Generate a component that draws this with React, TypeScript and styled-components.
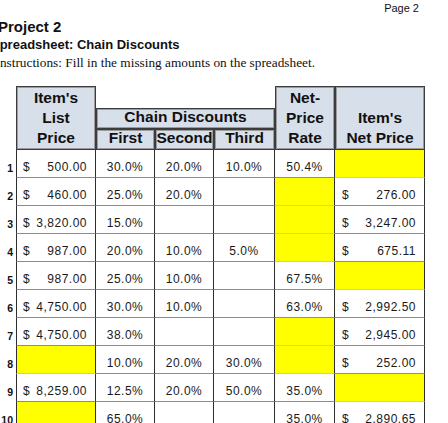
import React from "react";
import styled, { createGlobalStyle, css } from "styled-components";

const GlobalStyle = createGlobalStyle`
  html, body { margin: 0; padding: 0; background: #ffffff; }
  body { font-family: "Liberation Sans", Arial, sans-serif; color: #111; overflow: hidden; }
`;

const COLS = "16px 80px 59px 59px 61px 60px 90px";

const Page = styled.div`
  width: 448px;
  height: 423px;
  overflow: hidden;
`;

const PageNum = styled.div`
  font-size: 11px;
  line-height: 14px;
  padding-top: 1px;
  padding-right: 29px;
  text-align: right;
  color: #111;
`;

const Title = styled.h1`
  margin: 3px 0 0 -2px;
  font-size: 15px;
  line-height: 18px;
  font-weight: bold;
`;

const Subtitle = styled.h2`
  margin: 0 0 0 -9px;
  font-size: 13px;
  line-height: 18px;
  font-weight: bold;
`;

const Instructions = styled.p`
  margin: 0 0 0 -4.5px;
  font-family: "Liberation Serif", "Times New Roman", serif;
  font-size: 13.3px;
  line-height: 17px;
`;

const HeaderGrid = styled.div`
  display: grid;
  grid-template-columns: ${COLS};
  grid-template-rows: 22px 21px 21px;
  margin-top: 15px;
`;

const HeaderCell = styled.div<{ $col: string; $row: string }>`
  grid-column: ${(p) => p.$col};
  grid-row: ${(p) => p.$row};
  box-sizing: border-box;
  background: #d7dfea;
  border: 1px solid #3c3c3c;
  box-shadow: inset 0 0 0 1px #9c9c9c;
  display: flex;
  flex-direction: column;
  justify-content: flex-end;
  align-items: center;
  padding-bottom: 1px;
  font-weight: bold;
  font-size: 15.5px;
  line-height: 20px;
  color: #111;
  text-align: center;
  white-space: nowrap;
  overflow: hidden;
`;

const BodyGrid = styled.div`
  display: grid;
  grid-template-columns: ${COLS};
  grid-auto-rows: 28px;
`;

const RowNum = styled.div`
  display: flex;
  align-items: flex-end;
  justify-content: flex-end;
  padding: 0 3px 4px 0;
  font-size: 10.5px;
  line-height: 12px;
  font-weight: bold;
  color: #111;
`;

const Cell = styled.div<{ $yellow?: boolean; $first?: boolean; $money?: boolean; $lpad?: number }>`
  box-sizing: border-box;
  border-right: 1px solid #2e2e2e;
  border-bottom: 1px solid #8c8c8c;
  ${(p) => p.$first && css`border-left: 1px solid #2e2e2e;`}
  background: ${(p) => (p.$yellow ? "#ffff00" : "#ffffff")};
  ${(p) => p.$yellow && css`border-bottom-color: #d4d46a;`}
  display: flex;
  align-items: flex-end;
  justify-content: ${(p) => (p.$money ? "space-between" : "center")};
  padding: 0 ${(p) => (p.$money ? 8 : 0)}px 3px ${(p) => (p.$money ? p.$lpad ?? 6 : 0)}px;
  font-size: 12px;
  line-height: 14px;
  letter-spacing: 0.5px;
  color: #1a1a1a;
`;

type Row = {
  list: string | null;
  first: string;
  second: string;
  third: string;
  rate: string | null;
  net: string | null;
};

const rows: Row[] = [
  { list: "500.00", first: "30.0%", second: "20.0%", third: "10.0%", rate: "50.4%", net: null },
  { list: "460.00", first: "25.0%", second: "20.0%", third: "", rate: null, net: "276.00" },
  { list: "3,820.00", first: "15.0%", second: "", third: "", rate: null, net: "3,247.00" },
  { list: "987.00", first: "20.0%", second: "10.0%", third: "5.0%", rate: null, net: "675.11" },
  { list: "987.00", first: "25.0%", second: "10.0%", third: "", rate: "67.5%", net: null },
  { list: "4,750.00", first: "30.0%", second: "10.0%", third: "", rate: "63.0%", net: "2,992.50" },
  { list: "4,750.00", first: "38.0%", second: "", third: "", rate: null, net: "2,945.00" },
  { list: null, first: "10.0%", second: "20.0%", third: "30.0%", rate: null, net: "252.00" },
  { list: "8,259.00", first: "12.5%", second: "20.0%", third: "50.0%", rate: "35.0%", net: null },
  { list: null, first: "65.0%", second: "", third: "", rate: "35.0%", net: "2,890.65" },
];

const Money: React.FC<{ value: string | null; first?: boolean; lpad?: number }> = ({ value, first, lpad }) =>
  value === null ? (
    <Cell $yellow $first={first} />
  ) : (
    <Cell $money $first={first} $lpad={lpad}>
      <span>$</span>
      <span>{value}</span>
    </Cell>
  );

export default function App() {
  return (
    <Page>
      <GlobalStyle />
      <PageNum>Page 2</PageNum>
      <Title>Project 2</Title>
      <Subtitle>Spreadsheet: Chain Discounts</Subtitle>
      <Instructions>Instructions: Fill in the missing amounts on the spreadsheet.</Instructions>
      <HeaderGrid>
        <HeaderCell $col="2" $row="1 / 4">
          <span>Item's</span>
          <span>List</span>
          <span>Price</span>
        </HeaderCell>
        <HeaderCell $col="3 / 6" $row="2">
          <span>Chain Discounts</span>
        </HeaderCell>
        <HeaderCell $col="3" $row="3">
          <span>First</span>
        </HeaderCell>
        <HeaderCell $col="4" $row="3">
          <span>Second</span>
        </HeaderCell>
        <HeaderCell $col="5" $row="3">
          <span>Third</span>
        </HeaderCell>
        <HeaderCell $col="6" $row="1 / 4">
          <span>Net-</span>
          <span>Price</span>
          <span>Rate</span>
        </HeaderCell>
        <HeaderCell $col="7" $row="1 / 4">
          <span>Item's</span>
          <span>Net Price</span>
        </HeaderCell>
      </HeaderGrid>
      <BodyGrid>
        {rows.map((r, i) => (
          <React.Fragment key={i}>
            <RowNum>{i + 1}</RowNum>
            <Money value={r.list} first />
            <Cell>{r.first}</Cell>
            <Cell>{r.second}</Cell>
            <Cell>{r.third}</Cell>
            {r.rate === null ? <Cell $yellow /> : <Cell>{r.rate}</Cell>}
            <Money value={r.net} lpad={7} />
          </React.Fragment>
        ))}
      </BodyGrid>
    </Page>
  );
}
